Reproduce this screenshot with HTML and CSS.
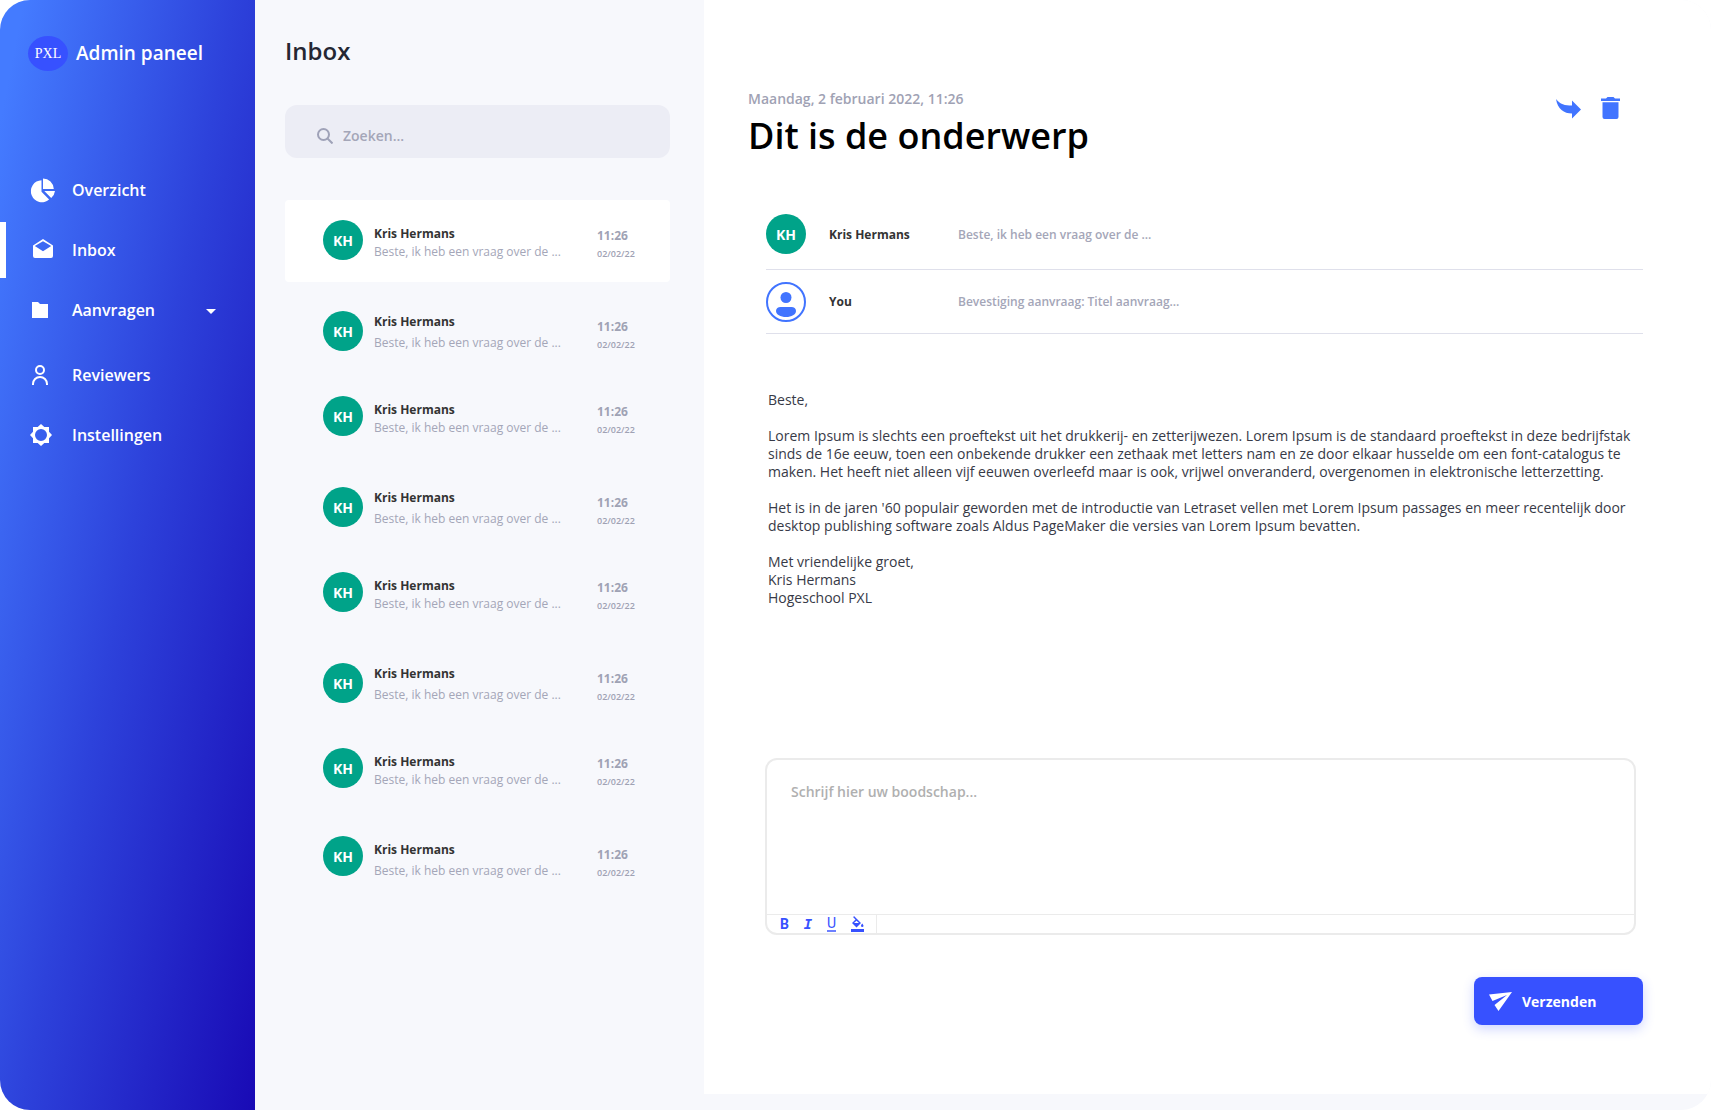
FILE: index.html
```html
<!DOCTYPE html>
<html lang="nl">
<head>
<meta charset="utf-8">
<meta name="viewport" content="width=device-width, initial-scale=1">
<title>Admin paneel - Inbox</title>
<link rel="stylesheet" href="styles.css">
</head>
<body>
<div class="app">
  <aside class="sidebar">
    <div class="brand"><span class="brand-logo">PXL</span><span>Admin paneel</span></div>
    <nav class="nav">
      <a class="nav-item" href="#overzicht">
        <svg class="nav-icon" viewBox="0 0 24 24"><path d="M11.500 2.200v11.500l7.600 7.800A11 11 0 1 1 11.500 2.200zM13 .5A11 11 0 0 1 23.800 11H13zM14.300 13H25a11 11 0 0 1-3.800 7z"/></svg>
        <span>Overzicht</span>
      </a>
      <a class="nav-item active" href="#inbox" aria-current="page">
        <svg class="nav-icon" viewBox="0 0 24 24"><path fill-rule="evenodd" d="M3 7.600 13 1l10 6.600V18a2 2 0 0 1-2 2H5a2 2 0 0 1-2-2zM13 3.300 4.800 8 13 13.300 21.200 8z"/></svg>
        <span>Inbox</span>
      </a>
      <a class="nav-item" href="#aanvragen">
        <svg class="nav-icon" viewBox="0 0 24 24"><path d="M2 4h6l2 2h8v14H2z"/></svg>
        <span>Aanvragen</span>
        <svg class="caret" viewBox="0 0 10 10"><path d="M0 4h10L5 9z"/></svg>
      </a>
      <a class="nav-item group" href="#reviewers">
        <svg class="nav-icon line" viewBox="0 0 24 24"><circle cx="10" cy="7" r="4"/><path d="M3 22v-1a7 7 0 0 1 14 0v1"/></svg>
        <span>Reviewers</span>
      </a>
      <a class="nav-item" href="#instellingen">
        <svg class="nav-icon" viewBox="0 0 24 24"><path fill-rule="evenodd" d="M11 1l3.300 3H19v4.700L22 12l-3 3.300V20h-4.700L11 23l-3.300-3H3v-4.700L0 12l3-3.300V4h4.700zM11 6a6 6 0 1 0 0 12 6 6 0 0 0 0-12z"/></svg>
        <span>Instellingen</span>
      </a>
    </nav>
  </aside>

  <section class="inbox">
    <h1 class="inbox-title">Inbox</h1>
    <label class="search">
      <svg class="search-icon" viewBox="0 0 16 16"><circle cx="6.500" cy="6.500" r="5.500"/><path d="M10.500 10.500 15.500 15.500"/></svg>
      <input type="search" placeholder="Zoeken..." aria-label="Zoeken">
    </label>
    <ul class="mails">
      <li class="mail selected"><span class="avatar">KH</span><div class="mail-text"><strong>Kris Hermans</strong><span>Beste, ik heb een vraag over de ...</span></div><div class="mail-time"><b>11:26</b><small>02/02/22</small></div></li>
      <li class="mail"><span class="avatar">KH</span><div class="mail-text"><strong>Kris Hermans</strong><span>Beste, ik heb een vraag over de ...</span></div><div class="mail-time"><b>11:26</b><small>02/02/22</small></div></li>
      <li class="mail"><span class="avatar">KH</span><div class="mail-text"><strong>Kris Hermans</strong><span>Beste, ik heb een vraag over de ...</span></div><div class="mail-time"><b>11:26</b><small>02/02/22</small></div></li>
      <li class="mail"><span class="avatar">KH</span><div class="mail-text"><strong>Kris Hermans</strong><span>Beste, ik heb een vraag over de ...</span></div><div class="mail-time"><b>11:26</b><small>02/02/22</small></div></li>
      <li class="mail"><span class="avatar">KH</span><div class="mail-text"><strong>Kris Hermans</strong><span>Beste, ik heb een vraag over de ...</span></div><div class="mail-time"><b>11:26</b><small>02/02/22</small></div></li>
      <li class="mail"><span class="avatar">KH</span><div class="mail-text"><strong>Kris Hermans</strong><span>Beste, ik heb een vraag over de ...</span></div><div class="mail-time"><b>11:26</b><small>02/02/22</small></div></li>
      <li class="mail"><span class="avatar">KH</span><div class="mail-text"><strong>Kris Hermans</strong><span>Beste, ik heb een vraag over de ...</span></div><div class="mail-time"><b>11:26</b><small>02/02/22</small></div></li>
      <li class="mail"><span class="avatar">KH</span><div class="mail-text"><strong>Kris Hermans</strong><span>Beste, ik heb een vraag over de ...</span></div><div class="mail-time"><b>11:26</b><small>02/02/22</small></div></li>
    </ul>
  </section>

  <main class="message">
    <header class="message-head">
      <div>
        <p class="date">Maandag, 2 februari 2022, 11:26</p>
        <h2 class="subject">Dit is de onderwerp</h2>
      </div>
      <div class="actions">
        <button type="button" aria-label="Doorsturen"><svg width="25" height="22" viewBox="0 0 25 22"><path d="M0 2c4 5.500 9 6.500 16 6.500V3.500l9 9-9 9v-5C8 16.500 1.500 12 0 2z"/></svg></button>
        <button type="button" aria-label="Verwijderen"><svg width="19" height="22" viewBox="0 0 19 22"><path d="M0 1.500h5L6.500 0h6L14 1.500h5V4H0zM1.500 5.200h16V20a2 2 0 0 1-2 2h-12a2 2 0 0 1-2-2z"/></svg></button>
      </div>
    </header>

    <div class="content">
      <ul class="thread">
        <li><span class="avatar">KH</span><strong>Kris Hermans</strong><span class="preview">Beste, ik heb een vraag over de ...</span></li>
        <li>
          <svg class="you" viewBox="0 0 40 40"><circle cx="20" cy="20" r="19" fill="none" stroke="#4174ff" stroke-width="2"/><circle cx="20" cy="15.500" r="5.500" fill="#4174ff"/><path fill="#4174ff" d="M14.500 25h11c2.500 0 4.500 1.500 4.500 4 0 3.500-4.500 6-10 6s-10-2.500-10-6c0-2.500 2-4 4.500-4z"/></svg>
          <strong>You</strong><span class="preview">Bevestiging aanvraag: Titel aanvraag...</span>
        </li>
      </ul>

      <div class="body">
        <p>Beste,</p>
        <p>Lorem Ipsum is slechts een proeftekst uit het drukkerij- en zetterijwezen. Lorem Ipsum is de standaard proeftekst in deze bedrijfstak<br>sinds de 16e eeuw, toen een onbekende drukker een zethaak met letters nam en ze door elkaar husselde om een font-catalogus te<br>maken. Het heeft niet alleen vijf eeuwen overleefd maar is ook, vrijwel onveranderd, overgenomen in elektronische letterzetting.</p>
        <p>Het is in de jaren '60 populair geworden met de introductie van Letraset vellen met Lorem Ipsum passages en meer recentelijk door<br>desktop publishing software zoals Aldus PageMaker die versies van Lorem Ipsum bevatten.</p>
        <p>Met vriendelijke groet,<br>Kris Hermans<br>Hogeschool PXL</p>
      </div>

      <form class="reply">
        <div class="editor">
          <textarea placeholder="Schrijf hier uw boodschap..." aria-label="Boodschap"></textarea>
          <div class="toolbar">
            <div class="tools">
              <button type="button" class="bold" aria-label="Vet">B</button>
              <button type="button" class="italic" aria-label="Cursief">I</button>
              <button type="button" class="underline" aria-label="Onderstrepen"><span>U</span></button>
              <button type="button" aria-label="Vulkleur"><svg width="13" height="16" viewBox="0 0 13 16"><path fill-rule="evenodd" d="M3 0 10 7 5.500 11.500 1 7 4.500 3.500 2.200 1.200zM5.500 4.700 3 7h5zM11.200 7.500c1 1.200 1.300 1.800 1.300 2.300a1.200 1.200 0 0 1-2.500 0c0-.5.300-1.100 1.200-2.300zM0 13h13v3H0z"/></svg></button>
            </div>
          </div>
        </div>
        <button type="submit" class="send"><svg width="23" height="19" viewBox="0 0 23 19"><path d="M0 2.500 23 0 9.500 19 5.500 13 18 3 3.500 9z"/></svg>Verzenden</button>
      </form>
    </div>
  </main>
</div>
</body>
</html>
```
FILE: styles.css
```css
* { box-sizing: border-box; }

body {
  margin: 0;
  background: #fff;
  font-family: "Open Sans", "Noto Sans", sans-serif;
  font-size: 14px;
  color: #252733;
}

h1, h2, p, ul { margin: 0; padding: 0; }
ul { list-style: none; }
button { padding: 0; border: 0; background: none; font: inherit; color: inherit; cursor: pointer; }

.app {
  display: grid;
  grid-template-columns: 255px 449px minmax(0, 1fr);
  min-height: 100vh;
  border-radius: 30px;
  overflow: hidden;
  background: #f7f8fc;
}

/* Sidebar */
.sidebar {
  padding-top: 35px;
  background: linear-gradient(101deg, #447bff 5%, #2d42db 50%, #190ab5 100%);
  color: #fff;
}
.brand {
  display: flex;
  align-items: center;
  gap: 8px;
  height: 36px;
  padding-left: 28px;
  font-size: 19px;
  font-weight: 600;
}
.brand-logo {
  width: 40px;
  height: 35px;
  border-radius: 50%;
  background: #3751ff;
  font: 14px/36px "Liberation Serif", serif;
  text-align: center;
}
.nav { margin-top: 89px; }
.nav-item {
  display: flex;
  align-items: center;
  height: 60px;
  padding: 0 39px 0 30px;
  color: #fff;
  font-size: 16px;
  font-weight: 600;
  text-decoration: none;
}
.nav-item.active {
  background: linear-gradient(#fff, #fff) 0 center / 6px 56px no-repeat;
}
.nav-item.group { margin-top: 5px; }
.nav-icon { width: 24px; height: 24px; margin-right: 18px; overflow: visible; fill: #fff; }
.nav-icon.line { fill: none; stroke: #fff; stroke-width: 2; }
.caret { width: 10px; height: 10px; margin-left: auto; fill: #fff; }

/* Mail list */
.inbox { padding: 35px 34px 0 30px; }
.inbox-title { font-size: 24px; line-height: 32px; font-weight: 600; }
.search {
  display: flex;
  align-items: center;
  gap: 10px;
  height: 53px;
  margin-top: 38px;
  padding: 8px 32px 0;
  border-radius: 12px;
  background: #ecedf5;
}
.search-icon { flex: none; width: 16px; height: 16px; fill: none; stroke: #9fa2b8; stroke-width: 2; }
.search input {
  flex: 1;
  min-width: 0;
  padding: 0;
  border: 0;
  outline: 0;
  background: none;
  font: 600 14px/20px "Open Sans", "Noto Sans", sans-serif;
  color: #252733;
}
.search input::placeholder { color: #a4a6b8; opacity: 1; }

.mails { display: grid; gap: 6px; margin-top: 22px; padding-top: 20px; }
.mail {
  display: flex;
  align-items: flex-start;
  height: 82px;
  padding: 20px 32px 0 38px;
  border-radius: 4px;
}
.mail.selected { background: #fff; }
.avatar {
  flex: none;
  width: 40px;
  height: 40px;
  border-radius: 50%;
  background: #00a389;
  color: #fff;
  font-size: 14px;
  line-height: 41px;
  font-weight: 700;
  text-align: center;
}
.mail-text { display: grid; margin: 5px 0 0 11px; font-size: 12px; line-height: 18px; }
.mail-text strong, .thread strong { color: #333; font-size: 12px; font-weight: 700; }
.mail-text span { color: #a4a6b8; }
.mail-time { display: grid; width: 41px; margin: 7px 0 0 auto; color: #9fa2b4; line-height: 18px; }
.mail-time b { font-size: 12px; }
.mail-time small { font-size: 9px; font-weight: 600; }
.mail:nth-child(even) .avatar { margin-top: 3px; }
.mail:nth-child(even) .mail-text { row-gap: 3px; }
.mail:nth-child(even) .mail-time { margin-top: 10px; }
.mail:last-child .avatar { margin-top: 0; }

/* Opened message */
.message { margin-bottom: 16px; padding: 90px 68px 69px 44px; background: #fff; }
.message-head { display: flex; justify-content: space-between; }
.date { color: #9fa2b4; font-size: 14px; line-height: 18px; font-weight: 600; }
.subject { margin-top: 4px; color: #000; font-size: 36px; line-height: 48px; font-weight: 600; }
.actions { display: flex; gap: 20px; align-items: flex-start; padding: 7px 23px 0 0; }
.actions svg { display: block; fill: #4174ff; }

.content { padding-left: 18px; }
.thread { margin-top: 40px; }
.thread li {
  display: grid;
  grid-template-columns: 40px 106px minmax(0, 1fr);
  column-gap: 23px;
  align-items: center;
  height: 64px;
  border-bottom: 1px solid #dfe0eb;
}
.thread li:first-child { height: 70px; padding-bottom: 1px; }
.you { width: 40px; height: 40px; }
.preview { color: #a4a6b8; font-size: 12px; font-weight: 600; }

.body { display: grid; gap: 18px; margin-top: 57px; padding-left: 2px; color: #373a47; font-size: 14px; line-height: 18px; }

.reply { display: flex; flex-direction: column; margin-top: 151px; }
.editor {
  margin: 0 7px 0 -1px;
  border: 2px solid #ebebeb;
  border-radius: 12px;
  overflow: hidden;
}
.editor textarea {
  display: block;
  width: 100%;
  height: 154px;
  padding: 22px 24px;
  border: 0;
  outline: 0;
  resize: none;
  background: none;
  font: 600 14px/20px "Open Sans", "Noto Sans", sans-serif;
  color: #373a47;
}
.editor textarea::placeholder { color: #b0b0b0; opacity: 1; }
.toolbar { height: 19px; border-top: 1px solid #ebebeb; }
.tools {
  display: flex;
  align-items: center;
  justify-content: space-between;
  width: 110px;
  height: 18px;
  padding: 0 12px 0 13px;
  border-right: 1px solid #ebebeb;
  color: #3751ff;
}
.tools button { font-size: 14px; line-height: 16px; }
.tools svg { display: block; fill: #3751ff; }
.tools .bold { font-family: Roboto, sans-serif; font-weight: 700; }
.tools .italic { font-family: "DejaVu Sans Mono", monospace; font-weight: 700; font-style: italic; }
.tools .underline { font-family: Roboto, sans-serif; line-height: 13px; border-bottom: 2px solid #6d80ff; }

.send {
  display: flex;
  align-items: center;
  align-self: flex-end;
  gap: 10px;
  width: 169px;
  height: 48px;
  margin-top: 42px;
  padding: 0 15px;
  border-radius: 8px;
  background: #3751ff;
  box-shadow: 0 4px 12px rgba(55, 81, 255, 0.24);
  color: #fff;
  font-weight: 700;
}
.send svg { fill: #fff; }
```
